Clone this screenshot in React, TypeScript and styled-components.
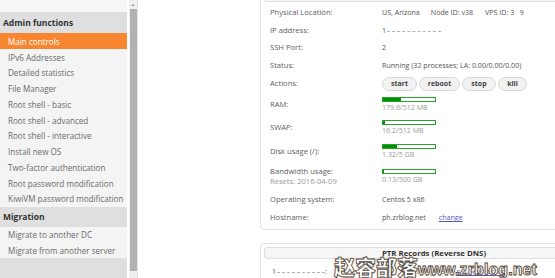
import styled, { createGlobalStyle } from 'styled-components';

const Global = createGlobalStyle`
  html, body {
    margin: 0;
    padding: 0;
    background: #ffffff;
    overflow: hidden;
  }
  body {
    font-family: "Open Sans", "Liberation Sans", sans-serif;
  }
`;

const Root = styled.div`
  position: relative;
  display: flex;
  width: 555px;
  height: 278px;
  overflow: hidden;
  background: #ffffff;
`;

const Sidebar = styled.nav`
  display: flex;
  flex-direction: column;
  flex-shrink: 0;
  width: 127px;
  background: #f4f4f4;
`;

const Stub = styled.div`
  height: 13px;
  background: #f6f6f6;
`;

const GroupHeader = styled.div<{ $h: number }>`
  display: flex;
  align-items: center;
  height: ${(p) => p.$h}px;
  padding-left: 3px;
  background: #dfdfdf;
  color: #333333;
  font-size: 8.5px;
  font-weight: 700;
`;

const MenuItem = styled.a<{ $active?: boolean }>`
  display: flex;
  align-items: center;
  height: ${(p) => (p.$active ? 17 : 16.7)}px;
  padding-left: 8px;
  background: ${(p) => (p.$active ? '#f8852f' : 'transparent')};
  color: ${(p) => (p.$active ? '#ffffff' : '#6a6a6a')};
  font-size: 8.1px;
  white-space: nowrap;
`;

const Scrollbar = styled.div`
  display: flex;
  flex-direction: column;
  align-items: center;
  flex-shrink: 0;
  width: 8px;
  margin-left: 2px;
  background: #efefef;
  border-right: 1px solid #e4e4e4;
`;

const ArrowUp = styled.div`
  width: 0;
  height: 0;
  margin: 4px 0 3px;
  border-left: 2px solid transparent;
  border-right: 2px solid transparent;
  border-bottom: 2px solid #9a9a9a;
`;

const Thumb = styled.div`
  flex: 1;
  width: 7px;
  margin-bottom: 7px;
  background: #b2b2b2;
`;

const Main = styled.main`
  display: flex;
  flex-direction: column;
  gap: 13px;
  flex: 1;
  margin-top: -14px;
  padding-left: 122px;
`;

const Panel = styled.section`
  flex-shrink: 0;
  width: 340px;
  padding: 3px;
  border: 1px solid #e3e3e3;
  border-radius: 4px;
  background: #ffffff;
`;

const PanelHead = styled.div`
  display: flex;
  align-items: center;
  justify-content: center;
  box-sizing: border-box;
  height: 12px;
  border: 1px solid #e0e0e0;
  border-radius: 3px;
  background: #f6f6f6;
  color: #333333;
  font-size: 7.8px;
  font-weight: 700;
`;

const Table = styled.div`
  padding: 2px 0 0 6px;
`;

const Row = styled.div<{ $h: number }>`
  display: grid;
  grid-template-columns: 112px 1fr;
  align-items: center;
  height: ${(p) => p.$h}px;
  color: #555555;
  font-size: 7.1px;
  line-height: 9px;
  white-space: nowrap;
`;

const Label = styled.div`
  color: #606060;
  font-size: 7.6px;
`;

const Sub = styled.div`
  margin-top: 1px;
  color: #999999;
`;

const Value = styled.div`
  display: flex;
  align-items: center;
`;

const Spaced = styled.span<{ $gap: number }>`
  margin-left: ${(p) => p.$gap}px;
`;

const Hidden = styled.span<{ $w: number }>`
  display: inline-block;
  width: ${(p) => p.$w}px;
  height: 3px;
  margin-left: 1px;
  border-bottom: 1px dashed #b5b5b5;
`;

const Buttons = styled.div`
  display: flex;
  gap: 2px;
`;

const ActionButton = styled.button<{ $w: number }>`
  width: ${(p) => p.$w}px;
  height: 14px;
  padding: 0;
  border: 1px solid #d9d9d9;
  border-radius: 7px;
  background: #f2f2f2;
  color: #444444;
  font-family: inherit;
  font-size: 7px;
  font-weight: 700;
`;

const Meter = styled.div`
  display: flex;
  flex-direction: column;
`;

const Bar = styled.div`
  box-sizing: border-box;
  width: 54px;
  height: 5px;
  border: 1px solid #2aa52a;
  background: #ffffff;
`;

const Fill = styled.div`
  height: 100%;
  background: #008f00;
`;

const MeterText = styled.div`
  margin-top: 1px;
  color: #9a9a9a;
`;

const Link = styled.a<{ $gap: number }>`
  margin-left: ${(p) => p.$gap}px;
  color: #5858c0;
  text-decoration: underline;
`;

const PtrRow = styled.div`
  display: grid;
  grid-template-columns: 131px 1fr;
  align-items: center;
  height: 18px;
  padding: 3px 0 0 8px;
  color: #555555;
  font-size: 7.1px;
  white-space: nowrap;
`;

const Watermark = styled.div`
  position: absolute;
  left: 334px;
  top: 251px;
  display: flex;
  align-items: baseline;
  color: #ffffff;
  font-weight: 900;
  -webkit-text-stroke: 0.8px #4a4a4a;
  text-shadow: 0 0 2px rgba(240, 140, 40, 0.9);
  white-space: nowrap;
  pointer-events: none;
`;

const MarkCn = styled.span`
  font-family: "Noto Sans CJK SC", sans-serif;
  font-size: 21px;
`;

const MarkEn = styled.span`
  font-family: "Liberation Sans", sans-serif;
  font-size: 16px;
  letter-spacing: 0.1px;
`;

const menu = [
  'IPv6 Addresses',
  'Detailed statistics',
  'File Manager',
  'Root shell - basic',
  'Root shell - advanced',
  'Root shell - interactive',
  'Install new OS',
  'Two-factor authentication',
  'Root password modification',
  'KiwiVM password modification',
];

const meters = [
  { label: 'RAM:', text: '179.6/512 MB', pct: 35, h: 22.5 },
  { label: 'SWAP:', text: '16.2/512 MB', pct: 3, h: 23.5 },
  { label: 'Disk usage (/):', text: '1.32/5 GB', pct: 26, h: 23.75 },
];

function App(): JSX.Element {
  return (
    <Root>
      <Global />
      <Sidebar>
        <Stub />
        <GroupHeader $h={22}>Admin functions</GroupHeader>
        <MenuItem $active>Main controls</MenuItem>
        {menu.map((m) => (
          <MenuItem key={m}>{m}</MenuItem>
        ))}
        <GroupHeader $h={21}>Migration</GroupHeader>
        <MenuItem>Migrate to another DC</MenuItem>
        <MenuItem>Migrate from another server</MenuItem>
        <GroupHeader $h={21} />
      </Sidebar>
      <Scrollbar>
        <ArrowUp />
        <Thumb />
      </Scrollbar>
      <Main>
        <Panel>
          <PanelHead />
          <Table>
            <Row $h={17.5}>
              <Label>Physical Location:</Label>
              <Value>
                US, Arizona
                <Spaced $gap={11}>Node ID: v38</Spaced>
                <Spaced $gap={12}>VPS ID: 3&nbsp;&nbsp;&nbsp;9</Spaced>
              </Value>
            </Row>
            <Row $h={17.5}>
              <Label>IP address:</Label>
              <Value>
                1<Hidden $w={54} />
              </Value>
            </Row>
            <Row $h={17.5}>
              <Label>SSH Port:</Label>
              <Value>2</Value>
            </Row>
            <Row $h={17.5}>
              <Label>Status:</Label>
              <Value>Running (32 processes; LA: 0.00/0.00/0.00)</Value>
            </Row>
            <Row $h={19.5}>
              <Label>Actions:</Label>
              <Buttons>
                <ActionButton $w={35}>start</ActionButton>
                <ActionButton $w={41}>reboot</ActionButton>
                <ActionButton $w={34}>stop</ActionButton>
                <ActionButton $w={29}>kill</ActionButton>
              </Buttons>
            </Row>
            {meters.map((m) => (
              <Row key={m.label} $h={m.h}>
                <Label>{m.label}</Label>
                <Meter>
                  <Bar>
                    <Fill style={{ width: `${m.pct}%` }} />
                  </Bar>
                  <MeterText>{m.text}</MeterText>
                </Meter>
              </Row>
            ))}
            <Row $h={26}>
              <Label>
                Bandwidth usage:
                <Sub>Resets: 2016-04-09</Sub>
              </Label>
              <Meter>
                <Bar>
                  <Fill style={{ width: '1%' }} />
                </Bar>
                <MeterText>0.13/500 GB</MeterText>
              </Meter>
            </Row>
            <Row $h={20.5}>
              <Label>Operating system:</Label>
              <Value>Centos 5 x86</Value>
            </Row>
            <Row $h={16}>
              <Label>Hostname:</Label>
              <Value>
                ph.zrblog.net
                <Link $gap={13}>change</Link>
              </Value>
            </Row>
          </Table>
        </Panel>
        <Panel>
          <PanelHead>PTR Records (Reverse DNS)</PanelHead>
          <PtrRow>
            <Value>
              1<Hidden $w={48} /> :
            </Value>
            <Value>
              ph.zrblog.net
              <Link $gap={10}>set new record</Link>
            </Value>
          </PtrRow>
        </Panel>
      </Main>
      <Watermark>
        <MarkCn>赵容部落</MarkCn>
        <MarkEn>www.zrblog.net</MarkEn>
      </Watermark>
    </Root>
  );
}

export default App;
